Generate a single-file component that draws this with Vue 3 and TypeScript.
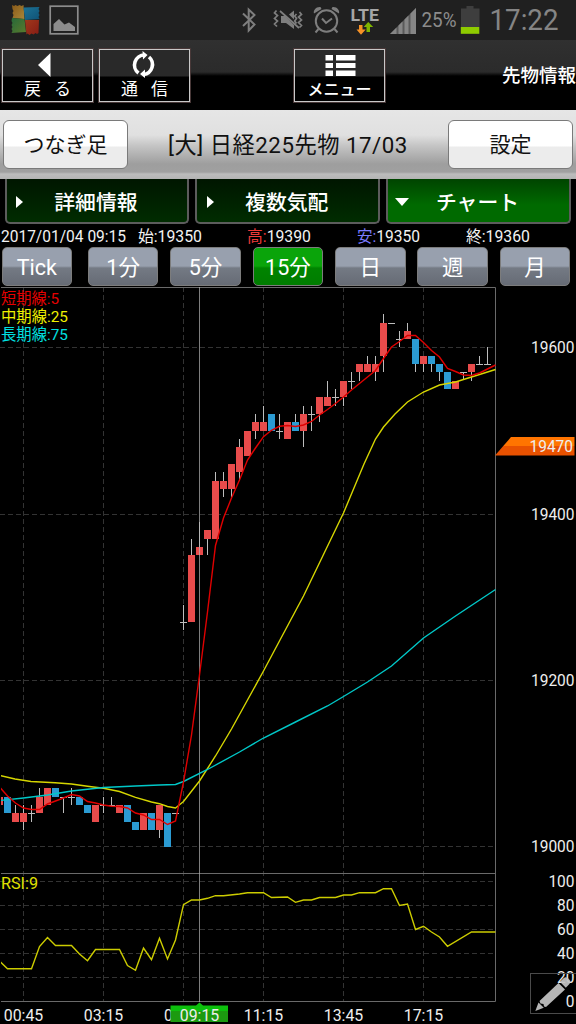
<script setup lang="ts">
type Candle = { o: 'u' | 'd' | 'n'; top: number; bottom: number; high?: number; low?: number }
type Tuple = ['u' | 'd' | 'n', number, number, number?, number?]

// kind, body top, body bottom, high, low (points above 19000)
const raw: Tuple[] = [
  ['u', 60, 50], ['d', 60, 40], ['u', 40, 30, 50], ['u', 40, 30, 50, 20], ['n', 40, 40, 50, 30],
  ['u', 60, 40, 70], ['u', 70, 50], ['d', 70, 60], ['n', 60, 60, 60, 40], ['n', 60, 60, 70, 50],
  ['d', 60, 50], ['d', 50, 40], ['u', 50, 30], ['n', 50, 50, 60, 40], ['n', 50, 50, 60, 50],
  ['u', 50, 40], ['d', 50, 30], ['d', 30, 20], ['u', 40, 20], ['d', 40, 20],
  ['u', 50, 20, 50, 10], ['d', 40, 0], ['n', 40, 40], ['n', 270, 270, 290, 260], ['u', 350, 270, 370],
  ['u', 360, 350, 390], ['u', 380, 370, 380, 350], ['u', 440, 370, 450], ['u', 440, 430, 450, 420], ['u', 460, 430, 460, 420],
  ['u', 480, 450, 490, 440], ['u', 500, 470], ['u', 510, 500, 520, 490], ['u', 510, 500, 530], ['d', 520, 500],
  ['n', 500, 500, 520, 490], ['u', 510, 490], ['d', 510, 500, 520], ['u', 520, 500, 530, 480], ['n', 520, 520, 530, 500],
  ['u', 540, 520, 540, 510], ['u', 540, 530, 560], ['n', 540, 540, 550, 530], ['u', 560, 540, 560, 530], ['n', 560, 560, 570, 550],
  ['u', 580, 570, 580, 560], ['u', 580, 570, 590, 570], ['u', 580, 570, 590, 560], ['u', 630, 590, 640, 570], ['n', 630, 630],
  ['n', 610, 610, 620, 600], ['u', 620, 610, 630], ['d', 610, 580, 610, 570], ['u', 590, 580, 590, 570], ['d', 590, 580, 590, 570],
  ['d', 580, 570, 580, 560], ['d', 570, 550], ['u', 560, 550], ['n', 570, 570, 570, 562], ['u', 580, 570, 580, 560],
  ['n', 580, 580, 590, 580], ['n', 580, 580, 600, 580],
]
const candles: Candle[] = raw.map(([o, top, bottom, high, low]) => ({ o, top, bottom, high, low }))
const cx = (i: number) => -0.5 + i * 8
const py = (p: number) => Math.round(846.5 - p * 0.8317)

const vLines = [23.5, 103.5, 183.5, 263.5, 343.5, 423.5]
const hLines = [347.5, 514.5, 680.5, 846.5, 881.5, 905.5, 929.5, 953.5, 977.5]

const ma5 = '0,787.5 7.5,796 15.5,803 23.5,808 31.5,809.5 39.5,809.5 47.5,804 55.5,801 63.5,798 71.5,794.5 79.5,796 87.5,801.5 95.5,803 103.5,805 111.5,806.3 119.5,806.5 127.5,808 135.5,813 143.5,815 151.5,819.5 159.5,819.5 167.5,824.5 175.5,821 183.5,782 191.5,735 199.5,675 207.5,612 215.5,545.5 223.5,518 231.5,498 239.5,480 247.5,460 255.5,448 263.5,436.7 271.5,430.3 279.5,426.3 287.5,425.5 295.5,426.5 303.5,425 311.5,421.5 319.5,415 327.5,409.5 335.5,403.5 343.5,397 351.5,390 359.5,383.5 367.5,377 375.5,370.5 383.5,358.5 391.5,347 399.5,341.5 407.5,335.5 415.5,335.5 423.5,342.5 431.5,350.5 439.5,357 447.5,368.5 455.5,371.5 463.5,375 471.5,375.5 479.5,373 487.5,369 495.5,365'
const ma25 = '0,775.5 15,779 31,781.5 55,782.7 71.5,784 87.5,786.3 103.5,788.3 119.5,791.5 135.5,797.3 151.5,802 159.5,803.7 167.5,806.5 175.5,808 183.5,801.5 199.5,781 215.5,756 231.5,729 247.5,700 263.5,671 280,640 303.5,596 330,541 343.5,513 364,464 375.5,439 383.5,427 395,414 407.5,402 423.5,392 439.5,385 455.5,382 471.5,377 495.5,369.5'
const ma75 = '0,800.5 23.5,798 47.5,795 71.5,791 103.5,787.5 135.5,786 159.5,785 175.5,784.5 183.5,781.5 207.5,769.5 239.5,752 263.5,738 295.5,722 327.5,706 343.5,696.5 367.5,682 391.5,666 423.5,638 455.5,616 495.5,589.5'
const rsi = '0,961.5 7.5,968.7 31.5,968.7 39.5,946.5 47.5,937.5 55.5,945.5 71.5,945.5 79.5,954 87.5,960.7 95.5,949.5 119.5,949.5 127.5,965.5 135.5,970.3 143.5,948 151.5,959.7 159.5,938.3 167.5,959 175.5,940 183.5,904.7 191.5,900 199.5,900 207.5,898.3 215.5,895.7 223.5,895.7 239.5,894 247.5,892.7 263.5,892.7 271.5,897.5 287.5,897 295.5,902.3 303.5,900 311.5,900 319.5,897.5 335.5,897.5 343.5,895 351.5,895 359.5,892.7 375.5,892.7 383.5,888.7 391.5,888.7 399.5,905.5 407.5,904 415.5,929.5 423.5,926.3 431.5,932 439.5,937 447.5,946.3 471.5,932 495.5,932'

const prices = [
  { t: '19600', y: 353 }, { t: '19400', y: 519.5 }, { t: '19200', y: 686 }, { t: '19000', y: 852 },
]
const levels = [
  { t: '100', y: 887 }, { t: '80', y: 911 }, { t: '60', y: 935 }, { t: '40', y: 959 }, { t: '20', y: 983 }, { t: '0', y: 1007 },
]
const times = [
  { t: '00:45', x: 23.5 }, { t: '03:15', x: 103.5 }, { t: '11:15', x: 263.5 },
  { t: '13:45', x: 343.5 }, { t: '17:15', x: 423.5 },
]
const legend = [
  { t: '短期線:5', c: '#e60000', y: 303.5, w: 58 },
  { t: '中期線:25', c: '#f0f000', y: 321.8, w: 67 },
  { t: '長期線:75', c: '#00e0e0', y: 340.3, w: 67 },
]
const periods = ['Tick', '1分', '5分', '15分', '日', '週', '月']
</script>

<template>
  <div class="screen">
    <header class="status">
      <svg width="576" height="40" viewBox="0 0 576 40">
        <defs>
          <linearGradient id="fa" x1="0" y1="0" x2="1" y2="1"><stop offset="0" stop-color="#8a5a18" /><stop offset="1" stop-color="#a8873a" /></linearGradient>
          <linearGradient id="fb" x1="0" y1="0" x2="1" y2="1"><stop offset="0" stop-color="#1d7396" /><stop offset="1" stop-color="#0f5276" /></linearGradient>
          <linearGradient id="fc" x1="0" y1="0" x2="1" y2="1"><stop offset="0" stop-color="#27693a" /><stop offset="1" stop-color="#5a7a2c" /></linearGradient>
          <linearGradient id="fd" x1="0" y1="0" x2="1" y2="1"><stop offset="0" stop-color="#a0381c" /><stop offset="1" stop-color="#861c14" /></linearGradient>
        </defs>
        <path d="M12 5l2 1 1.500-1 2 1 2-1 2 1 2-1 1 14-12-1 1-3-1-2 1-2-1-2z" fill="url(#fa)" />
        <path d="M23.500 7.500l16-.5-1 2 1 2-1 2 1 2-1 2 1 2-14.500 1z" fill="url(#fb)" />
        <path d="M12 18l12.500 1 1.500 13-14.500 1 1-2-1-2 1-2-1-2 1-2-1-2z" fill="url(#fc)" />
        <path d="M25 20l14 0-.5 13-1.500 1-1.500-1-2 1.500-2-1-2 1.500-2-1.500-1 1z" fill="url(#fd)" />
        <rect x="50.200" y="6.200" width="27.600" height="27.600" fill="none" stroke="#8c8c8c" stroke-width="1.700" />
        <path d="M53.500 31V24l5.500-5 5.500 5.500 4.500-2 6 4.500v4z" fill="#8c8c8c" />
        <path d="M243 13.500l11.500 11-5.800 6V9.500l5.800 5.500-11.500 11" fill="none" stroke="#7e7e7e" stroke-width="2" />
        <g fill="none" stroke="#7e7e7e" stroke-width="1.700">
          <path d="M276.500 10.500l-2 2.500 3 2.500-3 3 3 2.500-3 3 2.500 2.500M299.500 12l2 2.500-3 2.500 3 3-3 2.500 3 3-2 2M296.500 14l-1.800 2 1.800 2.500-1.800 2.500 1.800 2.500M280 11l19 17" />
        </g>
        <path d="M281 16l4 0 9 9v4l-8-6h-5zM289 14.500l5-4v9z" fill="#7e7e7e" />
        <g fill="none" stroke="#7e7e7e" stroke-width="2">
          <circle cx="326.500" cy="21" r="10.700" />
          <path d="M322 18.500l4 4.500 6-4.500M318.500 29l-3 3.500M334.500 29l3 3.500" />
        </g>
        <path d="M314 13.500c-1-3 2-7 6.500-6.500l1 2zM339 13.500c1-3-2-7-6.500-6.500l-1 2z" fill="#7e7e7e" />
        <text x="350.500" y="20.500" class="lte" textLength="28.500" lengthAdjust="spacingAndGlyphs">LTE</text>
        <path d="M359 25h3.500v4.500h3.200L361 34.700l-4.500-5.200H359z" fill="#f79226" />
        <path d="M366.500 32h3.500v-5h3.200L368.200 22l-4.500 5h2.800z" fill="#80b400" />
        <path d="M390 34L416 8V34z" fill="#5a5a5a" />
        <path d="M390 34l6.500-6.500V34zM398.500 25.500l4-4V34h-4zM404.500 19.500l4-4V34h-4zM410.500 13.500l5.500-5.500V34h-5.500z" fill="#868686" />
        <text x="421.500" y="27.300" class="pct" textLength="35" lengthAdjust="spacingAndGlyphs">25%</text>
        <path d="M466.500 6h7v2.500h6V27h-18.500V8.500h5.500z" fill="#3e3e3e" />
        <rect x="460.800" y="27" width="18.500" height="6.800" fill="#8ecb00" />
        <text x="489.500" y="29.500" class="clock" textLength="69" lengthAdjust="spacingAndGlyphs">17:22</text>
      </svg>
    </header>

    <nav class="nav">
      <button class="nbtn">
        <svg width="89" height="28" viewBox="0 0 89 28"><path d="M47.500 3v24L35 15z" fill="#fff" /></svg>
        <span class="gap">戻 る</span>
      </button>
      <button class="nbtn">
        <svg width="89" height="28" viewBox="0 0 89 28">
          <g fill="none" stroke="#fff" stroke-width="3.600">
            <path d="M44.500 5A10 10 0 0 0 38.500 23M43.500 24.500A10 10 0 0 0 49 7" />
          </g>
          <path d="M42.500 1l5 4-4.500 4.500zM45 19.500v8.500l-5-4z" fill="#fff" />
        </svg>
        <span class="gap">通 信</span>
      </button>
      <button class="nbtn menu">
        <svg width="89" height="28" viewBox="0 0 89 28"><path d="M30.500 5H38v5.500h-7.500zM41 5h19.500v5.500H41zM30.500 13H38v5h-7.500zM41 13h19.500v5H41zM30.500 20.500H38V26h-7.500zM41 20.500h19.500V26H41z" fill="#fff" /></svg>
        <span class="kana">メニュー</span>
      </button>
      <span class="page">先物情報</span>
    </nav>

    <section class="title">
      <button class="wbtn">つなぎ足</button>
      <h1>[大] 日経225先物 17/03</h1>
      <button class="wbtn">設定</button>
    </section>

    <section class="tabs">
      <button class="tab"><i class="right"></i>詳細情報</button>
      <button class="tab"><i class="right"></i>複数気配</button>
      <button class="tab on"><i class="down"></i>チャート</button>
    </section>

    <section class="quote">
      <svg width="576" height="23" viewBox="0 0 576 23">
        <g class="q">
          <text x="1" y="18" textLength="125" lengthAdjust="spacingAndGlyphs">2017/01/04 09:15</text>
          <text x="138" y="18" textLength="64" lengthAdjust="spacingAndGlyphs">始:19350</text>
          <text x="247" y="18" textLength="64" lengthAdjust="spacingAndGlyphs"><tspan fill="#f03a3a">高:</tspan>19390</text>
          <text x="357" y="18" textLength="63" lengthAdjust="spacingAndGlyphs"><tspan fill="#7c7cff">安:</tspan>19350</text>
          <text x="466" y="18" textLength="64" lengthAdjust="spacingAndGlyphs">終:19360</text>
        </g>
      </svg>
    </section>

    <section class="periods">
      <button v-for="p in periods" :key="p" class="pbtn" :class="{ on: p === '15分' }">{{ p }}</button>
    </section>

    <svg class="chart" width="576" height="737" viewBox="0 287 576 737">
      <defs>
        <linearGradient id="tag" x1="0" y1="0" x2="0" y2="1"><stop offset=".5" stop-color="#ff7400" /><stop offset=".5" stop-color="#e85100" /></linearGradient>
        <linearGradient id="now" x1="0" y1="0" x2="0" y2="1"><stop offset=".45" stop-color="#0cc00c" /><stop offset=".45" stop-color="#1c9a10" /></linearGradient>
        <clipPath id="plot"><rect x="1" y="287" width="495" height="715" /></clipPath>
      </defs>
      <g stroke="#333" stroke-width="1" stroke-dasharray="5 3">
        <path v-for="x in vLines" :key="x" :d="`M${x} 287V1001`" />
        <path v-for="y in hLines" :key="y" :d="`M0 ${y}H495`" />
      </g>
      <path d="M1 287.500H495.500V1001.500H1M1 873.500H495" fill="none" stroke="#6a6a6a" />
      <g clip-path="url(#plot)">
        <g v-for="(c, i) in candles" :key="i">
          <path v-if="c.high !== undefined" :d="`M${cx(i)} ${py(c.high)}V${py(c.low ?? c.bottom)}`" stroke="#bdbdbd" />
          <path v-if="c.o === 'n'" :d="`M${cx(i) - 3.5} ${py(c.top) + 0.5}h7`" stroke="#bdbdbd" />
          <rect v-else :x="cx(i) - 3.5" :y="py(c.top)" width="7" :height="py(c.bottom) - py(c.top)" :fill="c.o === 'u' ? '#e84b4b' : '#2b9bd3'" />
        </g>
        <path d="M199.500 287V1002" stroke="#b4b4b4" stroke-opacity=".7" />
        <g fill="none" stroke-width="1.400">
          <polyline :points="ma25" stroke="#d6d600" />
          <polyline :points="ma75" stroke="#00c8c8" />
          <polyline :points="ma5" stroke="#e00000" />
          <polyline :points="rsi" stroke="#cccc00" />
        </g>
      </g>
      <g class="lg">
        <text v-for="l in legend" :key="l.t" x="1" :y="l.y" :fill="l.c" :textLength="l.w" lengthAdjust="spacingAndGlyphs">{{ l.t }}</text>
        <text x="1" y="888.500" fill="#e0e000" class="rsi" textLength="37" lengthAdjust="spacingAndGlyphs">RSI:9</text>
      </g>
      <g class="ax">
        <text v-for="p in prices" :key="p.t" x="574.500" :y="p.y" text-anchor="end" textLength="43.500" lengthAdjust="spacingAndGlyphs">{{ p.t }}</text>
        <text v-for="p in levels" :key="p.t" x="574.500" :y="p.y" text-anchor="end" :textLength="p.t.length * 8.7" lengthAdjust="spacingAndGlyphs">{{ p.t }}</text>
        <text v-for="t in times" :key="t.t" :x="t.x" y="1020.500" text-anchor="middle" textLength="39.500" lengthAdjust="spacingAndGlyphs">{{ t.t }}</text>
        <text x="164" y="1020.500" textLength="8.700" lengthAdjust="spacingAndGlyphs">0</text>
      </g>
      <path d="M495 455.500L511 437H574.500V455.500z" fill="url(#tag)" />
      <path d="M170.500 1005.500H196l3.500-3 3.500 3H228V1022H170.500z" fill="url(#now)" />
      <g class="ax">
        <text x="573" y="452" text-anchor="end" textLength="43.500" lengthAdjust="spacingAndGlyphs">19470</text>
        <text x="199.500" y="1020.500" text-anchor="middle" textLength="39.500" lengthAdjust="spacingAndGlyphs">09:15</text>
      </g>
      <rect x="530.500" y="973.500" width="47" height="40" fill="none" stroke="#4a4a4a" />
      <g fill="#c4c4c4" fill-opacity=".93">
        <path d="M535.300 1011l3.200-8.500 5.300 5.300z" />
        <path d="M539.500 1001l19-18 6.500 6.500-19 17.500-2-.5-.5-2.500-3-.5z" />
        <path d="M559.800 981.800l4-3.800q2.200-1.800 4.200.2l1.500 1.500q1.900 2-.1 4.200l-3.600 3.900z" />
      </g>
    </svg>
  </div>
</template>

<style>
html,
body {
  background: #000;
}
</style>

<style scoped>
.screen {
  width: 576px;
  height: 1024px;
  overflow: hidden;
  background: #000;
  color: #fff;
  display: flex;
  flex-direction: column;
  font-family: Roboto, "Noto Sans CJK JP", sans-serif;
}
svg {
  display: block;
}
button {
  box-sizing: border-box;
  margin: 0;
  padding: 0;
  font-family: inherit;
  color: inherit;
}
.status {
  height: 40px;
  background: #202020;
}
.lte {
  font: 700 16.5px Roboto, sans-serif;
  fill: #a6a6a6;
}
.pct {
  font: 400 19.5px Roboto, sans-serif;
  fill: #8c8c8c;
}
.clock {
  font: 400 29px Roboto, sans-serif;
  fill: #858585;
}
.nav {
  height: 70px;
  display: flex;
  background: linear-gradient(#303030 0, #2b2b2b 32px, #000 36px);
  padding: 8px 0 0 1px;
  box-sizing: border-box;
}
.nbtn {
  flex: none;
  width: 93px;
  height: 55px;
  margin-right: 4px;
  border: 2px solid #c8c8c8;
  outline: 1px solid #483838;
  outline-offset: -1px;
  background: linear-gradient(#292929 26px, #000 27px);
  display: flex;
  flex-direction: column;
  align-items: center;
  justify-content: space-between;
  overflow: hidden;
}
.nbtn svg {
  flex: none;
}
.nbtn span {
  font-size: 17px;
  line-height: 23px;
  height: 23px;
  white-space: pre;
}
.gap {
  word-spacing: 9px;
}
.nbtn .kana {
  font-size: 16px;
  font-weight: 500;
}
.menu {
  margin-left: 98px;
}
.page {
  margin-left: auto;
  font-size: 18.5px;
  line-height: 56px;
  white-space: nowrap;
  font-weight: 500;
}
.title {
  height: 69px;
  box-sizing: border-box;
  padding: 10px 3px 0;
  display: flex;
  justify-content: space-between;
  background: linear-gradient(#e6e6e6 0, #e0e0e0 25px, #c4c4c4 36px, #9e9e9e 54px, #a0a0a0 62px, #bcbcbc 64px, #b4b4b4 69px);
  color: #111;
}
.wbtn {
  width: 125px;
  height: 49px;
  border: 1.5px solid #7a7a7a;
  border-radius: 6px;
  background: linear-gradient(#fff 25px, #ececec 26px);
  font-size: 21px;
  line-height: 46px;
}
.title h1 {
  margin: 0;
  font-weight: 400;
  font-size: 22.3px;
  letter-spacing: 0.5px;
  line-height: 50px;
  white-space: nowrap;
}
.tabs {
  height: 45px;
  display: flex;
  gap: 6px;
  padding-left: 4.5px;
}
.tab {
  flex: none;
  width: 184.8px;
  height: 45px;
  border: 2px solid #5c5c5c;
  border-top: 0;
  border-radius: 0 0 5px 5px;
  background: linear-gradient(#001600, #002c00);
  padding-right: 2px;
  font-size: 20.8px;
  line-height: 48px;
  font-weight: 500;
  position: relative;
}
.tab.on {
  background: linear-gradient(#004400, #006a00 60%);
}
.tab i {
  position: absolute;
  left: 9.5px;
  top: 17px;
  border: 6.5px solid transparent;
  border-left: 7.5px solid #fff;
  border-right: 0;
}
.tab i.down {
  left: 6.5px;
  top: 19px;
  border: 7px solid transparent;
  border-top: 8px solid #fff;
  border-bottom: 0;
}
.quote {
  height: 23px;
}
.q text {
  font-size: 16px;
  fill: #f2f2f2;
}
.periods {
  height: 40px;
  display: flex;
  gap: 11.9px;
  padding-left: 1.5px;
}
.pbtn {
  flex: none;
  width: 70.5px;
  height: 39px;
  border: 1px solid #7c7c7c;
  border-radius: 5px;
  background: linear-gradient(#98a0ae 18px, #747a84 20px, #666b75);
  font-size: 21.5px;
  line-height: 39px;
}
.pbtn:first-child {
  margin-right: 4px;
}
.pbtn.on {
  background: linear-gradient(#0aa40a 18px, #008400 20px, #007c00);
}
.lg text {
  font-size: 15.5px;
}
.lg .rsi {
  font-size: 16.5px;
}
.ax text {
  font-size: 16px;
  fill: #eee;
}
.chart {
  flex: none;
}
</style>
